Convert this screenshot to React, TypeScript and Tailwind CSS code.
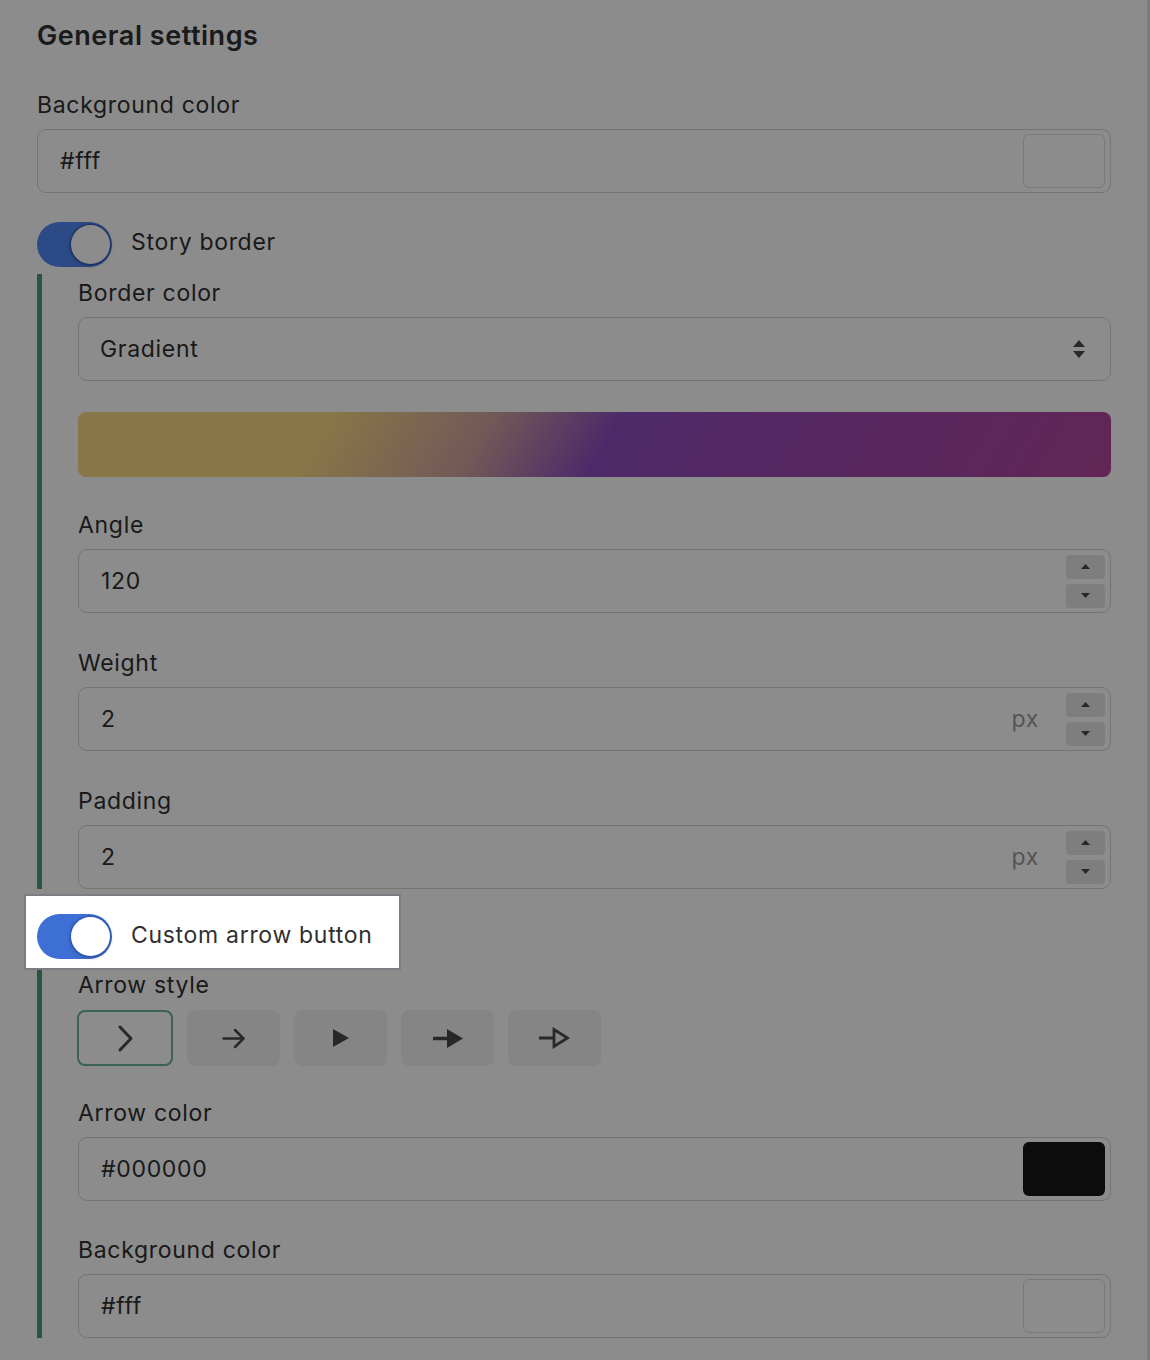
import React from "react";

function Label({ children }: { children: React.ReactNode }) {
  return <div className="mb-[10px] h-[28px] text-[23px] leading-[28px] tracking-[0.03em]">{children}</div>;
}

function Toggle({ track }: { track: string }) {
  return (
    <div className={`flex h-[45px] w-[75px] shrink-0 items-center justify-end rounded-full pr-[2px] ${track}`}>
      <div className="h-[39px] w-[39px] rounded-full bg-white shadow-[0_0_0_1.5px_rgba(45,80,170,0.55),0_1px_4px_rgba(0,0,0,0.35)]" />
    </div>
  );
}

function ColorInput({ value, swatch }: { value: string; swatch: string }) {
  return (
    <div className="flex h-[64px] items-center rounded-[9px] border border-[#d3d3d3] pl-[22px] pr-[5px]">
      <span className="flex-1 text-[23px] tracking-[0.03em]">{value}</span>
      <div className={`h-[54px] w-[82px] rounded-[6px] ${swatch}`} />
    </div>
  );
}

function Spinner() {
  return (
    <div className="flex flex-col gap-[5px]">
      <div className="flex h-[24px] w-[39px] items-center justify-center rounded-[4px] bg-[#e6e6e6]">
        <svg width="9" height="5" viewBox="0 0 9 5"><path d="M4.5 0 L9 5 L0 5 Z" fill="#4a4a4a" /></svg>
      </div>
      <div className="flex h-[24px] w-[39px] items-center justify-center rounded-[4px] bg-[#e6e6e6]">
        <svg width="9" height="5" viewBox="0 0 9 5"><path d="M0 0 L9 0 L4.5 5 Z" fill="#4a4a4a" /></svg>
      </div>
    </div>
  );
}

function NumberInput({ value, unit }: { value: string; unit?: string }) {
  return (
    <div className="flex h-[64px] items-center rounded-[9px] border border-[#d3d3d3] pl-[22px] pr-[5px]">
      <span className="flex-1 text-[23px] tracking-[0.03em]">{value}</span>
      {unit && <span className="mr-[27px] text-[23px] tracking-[0.03em] text-[#9a9a9a]">{unit}</span>}
      <Spinner />
    </div>
  );
}

const arrowIcons = [
  <svg key="a" width="17" height="29" viewBox="0 0 17 29">
    <path d="M3 3 L14 14.5 L3 26" fill="none" stroke="#4a4a4a" strokeWidth="3" strokeLinecap="round" strokeLinejoin="round" />
  </svg>,
  <svg key="b" width="24" height="21" viewBox="0 0 24 21">
    <path d="M1.5 10.5 H21.5 M13 2 L21.5 10.5 L13 19" fill="none" stroke="#4a4a4a" strokeWidth="2.5" strokeLinecap="round" strokeLinejoin="round" />
  </svg>,
  <svg key="c" width="16" height="18" viewBox="0 0 16 18">
    <path d="M0 0 L16 9 L0 18 Z" fill="#4a4a4a" />
  </svg>,
  <svg key="d" width="30" height="19" viewBox="0 0 30 19">
    <path d="M0 9.5 H16" stroke="#4a4a4a" strokeWidth="3.5" />
    <path d="M14 0 L30 9.5 L14 19 Z" fill="#4a4a4a" />
  </svg>,
  <svg key="e" width="31" height="22" viewBox="0 0 31 22">
    <path d="M0 11 H15" stroke="#4a4a4a" strokeWidth="3" />
    <path d="M15 2.5 L28.5 11 L15 19.5 Z" fill="none" stroke="#4a4a4a" strokeWidth="2.8" strokeLinejoin="miter" />
  </svg>,
];

export default function App() {
  return (
    <div className="relative min-h-[1360px] bg-white font-['Inter','Liberation_Sans',sans-serif] text-[#303030]">
      <div className="min-h-[1360px] border-r-[3px] border-[#e2e2e2] pl-[37px] pr-[36px] pt-[20px]">
        <h2 className="h-[32px] text-[27px] font-semibold leading-[32px] tracking-[0.02em]">General settings</h2>

        <div className="mt-[39px]">
          <Label>Background color</Label>
          <ColorInput value="#fff" swatch="border border-[#dedede] bg-white" />
        </div>

        <div className="mt-[29px] flex items-center gap-[19px]">
          <Toggle track="bg-[#5088f2]" />
          <span className="-mt-[4px] text-[23px] tracking-[0.03em]">Story border</span>
        </div>

        <div className="mt-[7px] border-l-[5px] border-[#4c9c7c] pl-[36px] pt-[5px]">
          <Label>Border color</Label>
          <div className="flex h-[64px] items-center rounded-[9px] border border-[#d3d3d3] pl-[21px] pr-[25px]">
            <span className="flex-1 text-[23px] tracking-[0.03em]">Gradient</span>
            <svg width="12" height="18" viewBox="0 0 12 18">
              <path d="M6 0 L12 7 L0 7 Z M0 11 L12 11 L6 18 Z" fill="#4a4a4a" />
            </svg>
          </div>
          <div className="mt-[31px] h-[65px] rounded-[8px] bg-[linear-gradient(120deg,#f7d783_24%,#d0a3a0_39%,#8e4cbf_51%,#b2459b_100%)]" />

          <div className="mt-[34px]">
            <Label>Angle</Label>
            <NumberInput value="120" />
          </div>
          <div className="mt-[36px]">
            <Label>Weight</Label>
            <NumberInput value="2" unit="px" />
          </div>
          <div className="mt-[36px]">
            <Label>Padding</Label>
            <NumberInput value="2" unit="px" />
          </div>
        </div>

        <div className="relative z-20 mt-[5px] -ml-[13px] flex w-fit items-center gap-[19px] border-2 border-[#7b7d82] bg-white pb-[9px] pl-[11px] pr-[26px] pt-[18px]">
          <Toggle track="bg-[#3d6fd4]" />
          <span className="-mt-[2px] text-[23px] tracking-[0.03em]">Custom arrow button</span>
        </div>

        <div className="-mt-[2px] border-l-[5px] border-[#4c9c7c] pl-[36px] pt-[3px]">
          <div className="mb-[11px] h-[28px] text-[23px] leading-[28px] tracking-[0.03em]">Arrow style</div>
          <div className="flex gap-[14px]">
            {arrowIcons.map((icon, i) => (
              <div
                key={i}
                className={
                  i === 0
                    ? "-ml-[1px] flex h-[56px] w-[96px] items-center justify-center rounded-[8px] border-2 border-[#6bb597] bg-white"
                    : "flex h-[56px] w-[93px] items-center justify-center rounded-[8px] bg-[#f2f2f2]"
                }
              >
                {icon}
              </div>
            ))}
          </div>

          <div className="mt-[33px]">
            <Label>Arrow color</Label>
            <ColorInput value="#000000" swatch="bg-[#161616]" />
          </div>
          <div className="mt-[35px]">
            <Label>Background color</Label>
            <ColorInput value="#fff" swatch="border border-[#dedede] bg-white" />
          </div>
        </div>
      </div>

      <div className="fixed inset-0 z-10 bg-black/45" />
    </div>
  );
}
